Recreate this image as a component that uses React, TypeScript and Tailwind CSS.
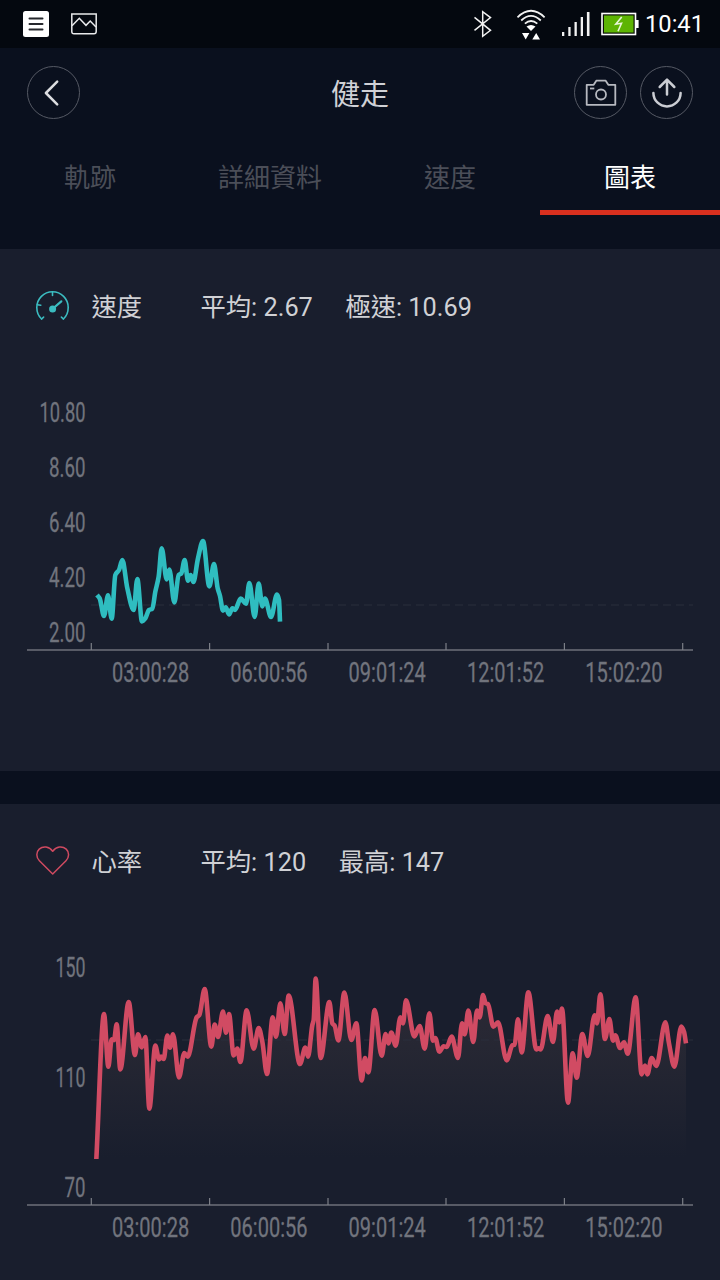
import React from "react";

type Point = [number, number];

// Samples are stored at three steps per pixel, measured from each run's own origin.
type Run = { x: number; y: number; points: Point[] };

const speedRuns: Run[] = [
  {
    x: 60,
    y: 390,
    points: [
      [231, 225], [239, 235], [252, 288], [264, 226], [275, 296], [286, 165], [297, 150], [307, 120],
      [322, 205], [341, 270], [352, 177], [366, 304], [376, 295], [387, 270], [397, 266], [406, 215],
      [416, 170], [425, 85], [440, 178], [448, 149], [463, 247], [476, 165], [484, 160], [494, 120],
      [504, 182], [512, 165], [520, 186], [534, 115], [549, 63], [568, 199], [582, 132], [593, 205],
      [600, 228], [609, 272], [617, 262], [627, 283], [637, 265], [645, 270], [662, 236], [678, 251],
      [688, 189], [704, 291], [716, 191], [727, 259], [735, 236], [753, 291], [771, 224], [777, 240],
      [780, 305],
    ],
  },
];

const heartRuns: Run[] = [
  {
    x: 240,
    y: 45,
    points: [
      [49, 597], [72, 162], [85, 320], [95, 238], [102, 240], [110, 193], [121, 328], [146, 126],
      [165, 285], [174, 223], [185, 262], [196, 231], [208, 446], [226, 257], [237, 298], [243, 290],
      [251, 297], [262, 227], [270, 263], [279, 223], [297, 352], [313, 279], [323, 290], [350, 172],
      [358, 165], [374, 87], [394, 260], [404, 194], [414, 231], [429, 155], [438, 218], [447, 162],
      [461, 286], [472, 266], [481, 306], [500, 151], [521, 266], [536, 204], [547, 245], [561, 342],
      [578, 172], [588, 230], [601, 130], [614, 222],
    ],
  },
  {
    x: 840,
    y: 45,
    points: [
      [26, 107], [60, 312], [76, 263], [84, 290], [97, 195], [101, 180], [107, 56], [122, 294],
      [148, 126], [157, 190], [164, 197], [175, 241], [193, 98], [214, 240], [229, 190], [245, 361],
      [255, 294], [265, 337], [284, 150], [305, 287], [317, 222], [325, 250], [334, 218], [347, 257],
      [361, 172], [369, 190], [378, 121], [403, 229], [419, 198], [434, 266], [448, 160], [459, 242],
      [466, 234], [478, 275], [491, 259], [500, 261], [515, 230], [534, 294], [546, 190], [554, 223],
      [565, 152], [580, 246], [591, 152], [599, 172],
    ],
  },
  {
    x: 1440,
    y: 45,
    points: [
      [9, 105], [17, 130], [24, 132], [40, 200], [54, 187], [80, 301], [97, 256], [104, 254],
      [114, 178], [125, 277], [145, 97], [169, 268], [176, 265], [182, 268], [203, 168], [219, 246],
      [231, 155], [238, 187], [246, 146], [264, 428], [278, 280], [290, 353], [307, 222], [323, 288],
      [344, 166], [351, 190], [361, 103], [375, 237], [388, 177], [399, 242], [406, 226], [420, 264],
      [432, 247], [443, 281], [467, 112], [485, 343], [495, 317], [502, 343], [515, 294], [529, 318],
      [556, 187], [567, 250], [583, 320], [604, 200], [612, 215], [618, 250],
    ],
  },
];

function toPixels(runs: Run[]): Point[] {
  return runs.flatMap((r) => r.points.map(([x, y]): Point => [(r.x + x) / 3, (r.y + y) / 3]));
}

// Monotone cubic interpolation: peaks stay where the samples put them.
function smoothPath(p: Point[]): string {
  const n = p.length;
  const slope = (i: number) => (p[i + 1][1] - p[i][1]) / (p[i + 1][0] - p[i][0]);
  const tangent = p.map((_, i) => {
    if (i === 0) return slope(0);
    if (i === n - 1) return slope(n - 2);
    const a = slope(i - 1);
    const b = slope(i);
    return a * b <= 0 ? 0 : (2 * a * b) / (a + b);
  });
  let d = `M${p[0][0]} ${p[0][1]}`;
  for (let i = 0; i < n - 1; i++) {
    const h = (p[i + 1][0] - p[i][0]) / 3;
    d += `C${p[i][0] + h} ${p[i][1] + h * tangent[i]} ${p[i + 1][0] - h} ${p[i + 1][1] - h * tangent[i + 1]} ${p[i + 1][0]} ${p[i + 1][1]}`;
  }
  return d;
}

const times = ["03:00:28", "06:00:56", "09:01:24", "12:01:52", "15:02:20"];

type YLabel = { text: string; y: number; width: number };

type ChartProps = { runs: Run[]; color: string; average: number; yLabels: YLabel[]; fill?: boolean };

function Chart({ runs, color, average, yLabels, fill }: ChartProps) {
  const points = toPixels(runs);
  const path = smoothPath(points);
  const first = points[0];
  const last = points[points.length - 1];
  return (
    <svg viewBox="0 0 720 310" className="block h-[310px] w-full shrink-0 font-['Roboto',sans-serif] text-[27.5px]">
      <defs>
        <linearGradient id="area" x1="0" y1="30" x2="0" y2="212" gradientUnits="userSpaceOnUse">
          <stop offset="0" stopColor="#2d2a36" />
          <stop offset="0.4" stopColor="#262733" />
          <stop offset="1" stopColor="#191e2d" />
        </linearGradient>
      </defs>
      {fill && <path d={`${path}L${last[0]} 212L${first[0]} 212Z`} fill="url(#area)" />}
      <line x1="91" x2="693" y1={average} y2={average} stroke="#2a2f3c" strokeWidth="1" strokeDasharray="8 5" />
      <path d={path} fill="none" stroke={color} strokeWidth="4.6" strokeLinejoin="round" />
      <path d="M27 260H693" stroke="#6e717a" strokeWidth="1.4" />
      <path d="M91.3 253V260M209.6 253V260M328 253V260M446 253V260M564.4 253V260M682.7 253V260" stroke="#7c7f87" strokeWidth="1.2" />
      <g fill="#71747d" stroke="#71747d" strokeWidth="0.3">
        {yLabels.map((l) => (
          <text key={l.text} x={85.5 - l.width} y={l.y} textLength={l.width} lengthAdjust="spacingAndGlyphs">
            {l.text}
          </text>
        ))}
        {times.map((t, i) => (
          <text key={t} x={111.9 + i * 118.35} y={292} textLength="77.3" lengthAdjust="spacingAndGlyphs">
            {t}
          </text>
        ))}
      </g>
    </svg>
  );
}

function RoundButton({ children }: { children: React.ReactNode }) {
  return (
    <button className="flex size-[53px] items-center justify-center rounded-full border border-[#555964]">{children}</button>
  );
}

function PanelHeader({ icon, name, stats }: { icon: React.ReactNode; name: string; stats: [string, string] }) {
  return (
    <div className="flex h-[114px] shrink-0 items-center pl-[35px] text-[25.3px] whitespace-pre text-[#d0d1d5]">
      {icon}
      <span className="ml-[21.5px] w-[109px] pt-[3px]">{name}</span>
      <span className="mr-[32.5px] pt-[3px]">{stats[0]}</span>
      <span className="pt-[3px]">{stats[1]}</span>
    </div>
  );
}

function StatusBar() {
  return (
    <div className="flex h-12 shrink-0 items-center bg-[#04080f] pl-[23px] text-white">
      <svg width="26" height="26" viewBox="0 0 26 26">
        <rect width="26" height="26" rx="2.5" fill="#fff" />
        <path d="M6.5 7.5H19.5M6.5 13H19.5M6.5 18.5H19.5" stroke="#26282d" strokeWidth="2" strokeLinecap="round" />
      </svg>
      <svg width="26" height="22" viewBox="0 0 26 22" className="ml-[22px]" fill="none" stroke="#e9eaec" strokeWidth="1.5">
        <path d="M.8 .9H25.2V18.5Q25.2 20.8 23 20.8H3Q.8 20.8 .8 18.5Z" />
        <path d="M1 12.7L8.3 5.3L15 12.3L19.2 8L25 14" />
      </svg>
      <svg width="20" height="28" viewBox="0 0 20 28" className="ml-[376px]" fill="none" stroke="#f2f2f2" strokeWidth="1.5">
        <path d="M1.5 7.3L17.5 20.3L9.7 26.3V1.7L17.5 7.6L1.5 20.3" />
      </svg>
      <svg width="30" height="32" viewBox="0 0 30 32" className="ml-[23px]" fill="none" stroke="#f2f2f2" strokeWidth="1.8">
        <path d="M1.5 9.3Q15 -3.8 28.6 9.3" />
        <path d="M5.2 12.5Q15 3.3 24.8 12.5" />
        <path d="M8.9 15.6Q15 10.3 21.3 15.6" />
        <path d="M15 23L10.5 18.6Q15 15.5 19.5 18.6Z" fill="#fff" stroke="none" />
        <path d="M6 25H13.4L9.7 31.4ZM16.3 31.4H24L20.2 25Z" fill="#fff" stroke="none" />
      </svg>
      <svg width="29" height="26" viewBox="0 0 29 26" className="ml-[15px]" fill="#f2f2f2">
        <path d="M1 21H3.3V25H1ZM7.3 16H9.6V25H7.3ZM13.5 11H15.8V25H13.5ZM19.7 6H22V25H19.7ZM25.9 1H28.5V25H25.9Z" />
      </svg>
      <svg width="38" height="24" viewBox="0 0 38 24" className="ml-[11px]">
        <rect x="1" y="1.5" width="33.5" height="21" fill="#0b1207" stroke="#fff" strokeWidth="1.6" />
        <rect x="3" y="3.5" width="29.5" height="17" fill="#5db403" />
        <rect x="35" y="8" width="2.6" height="8" fill="#fff" />
        <path d="M20.7 5L14.8 12.2L20.5 11.3L17 19.3" fill="none" stroke="#e8f6d8" strokeWidth="1.6" />
      </svg>
      <span className="ml-[6px] pt-[2px] font-['Roboto',sans-serif] text-[23.7px] leading-none">10:41</span>
    </div>
  );
}

const tabs = ["軌跡", "詳細資料", "速度", "圖表"];

export default function App() {
  return (
    <div className="flex h-[1280px] w-[720px] flex-col overflow-hidden bg-[#0a101e] font-['Roboto','Noto_Sans_CJK_TC',sans-serif]">
      <StatusBar />
      <header className="flex h-[89px] shrink-0 items-center pr-[27px] pl-[27px]">
        <div className="flex flex-1">
          <RoundButton>
            <svg width="26" height="30" viewBox="0 0 26 30" fill="none" stroke="#dcdde0" strokeWidth="2.5" strokeLinecap="round" strokeLinejoin="round">
              <path d="M16.2 3.7L4.9 15L16.2 26.3" />
            </svg>
          </RoundButton>
        </div>
        <h1 className="pt-[5px] text-[29px] leading-none text-[#d0d1d6]">健走</h1>
        <div className="flex flex-1 justify-end gap-[13px]">
          <RoundButton>
            <svg width="32" height="28" viewBox="0 0 32 28" fill="none" stroke="#b7b9c0" strokeWidth="1.8">
              <path d="M1.7 5.8H8.7L11.3 1.7H20.7L23.3 5.8H30.3V25.8H1.7Z" strokeLinejoin="round" />
              <circle cx="16" cy="15.5" r="5" />
              <path d="M5 9.5H9.3" />
            </svg>
          </RoundButton>
          <RoundButton>
            <svg width="32" height="32" viewBox="0 0 32 32" fill="none" stroke="#cbcdd3" strokeWidth="2.5" strokeLinecap="round" strokeLinejoin="round">
              <path d="M16 17.5V3M8.7 10L16 2.7L23.3 10" />
              <path d="M2.4 16A13.6 13.4 0 0 0 29.6 16" />
            </svg>
          </RoundButton>
        </div>
      </header>
      <nav className="grid h-[78px] shrink-0 grid-cols-4 text-center text-[26px] text-[#4b4e58]">
        {tabs.map((t) => (
          <a
            key={t}
            className={
              t === "圖表"
                ? "flex items-center justify-center border-b-[5px] border-[#d9301f] pt-[9px] text-white"
                : "flex items-center justify-center border-b-[5px] border-transparent pt-[9px]"
            }
          >
            {t}
          </a>
        ))}
      </nav>
      <section className="mt-[34px] flex h-[522px] shrink-0 flex-col bg-[#191e2d]">
        <PanelHeader
          name="速度"
          stats={["平均: 2.67", "極速: 10.69"]}
          icon={
            <svg width="35" height="32" viewBox="0 0 35 32" fill="none" stroke="#3bbcc0" strokeWidth="1.6" strokeLinecap="round">
              <path d="M6.6 29C3.7 26.3 1.8 22.2 1.8 17.5A15.7 15.7 0 0 1 33.2 17.5C33.2 22.2 31.3 26.3 28.4 29" />
              <path d="M17.5 2.2V5.5M2.3 14.7L5.8 15.2M6.6 29L8.6 27.1M28.4 29L26.4 27.1" />
              <path d="M18 18.5L26.3 11.3" strokeWidth="2.2" />
              <circle cx="17.6" cy="19" r="3.5" fill="#3bbcc0" stroke="none" />
            </svg>
          }
        />
        <div className="mt-[27px] flex">
          <Chart
            runs={speedRuns}
            color="#2fbdc0"
            average={215}
            yLabels={[
              { text: "10.80", y: 32, width: 46 },
              { text: "8.60", y: 86.5, width: 36.5 },
              { text: "6.40", y: 141.5, width: 36.5 },
              { text: "4.20", y: 197, width: 36.5 },
              { text: "2.00", y: 251.7, width: 36.5 },
            ]}
          />
        </div>
      </section>
      <section className="mt-[33px] flex flex-1 flex-col bg-[#191e2d]">
        <PanelHeader
          name="心率"
          stats={["平均: 120", "最高: 147"]}
          icon={
            <svg width="35" height="32" viewBox="0 0 35 32" fill="none" stroke="#cf4a60" strokeWidth="1.5" strokeLinejoin="round">
              <path d="M17.7 29L4.4 15.8C1 12.3 1 7 4.2 4.1C7.9 .7 14.2 1.1 17.7 6.3C21.2 1.1 27.5 .7 31.2 4.1C34.4 7 34.4 12.3 31 15.8Z" />
            </svg>
          }
        />
        <div className="mt-[27px] flex">
          <Chart
            runs={heartRuns}
            color="#d14b63"
            average={95}
            fill
            yLabels={[
              { text: "150", y: 32, width: 30 },
              { text: "110", y: 142, width: 30 },
              { text: "70", y: 252, width: 21 },
            ]}
          />
        </div>
      </section>
    </div>
  );
}
